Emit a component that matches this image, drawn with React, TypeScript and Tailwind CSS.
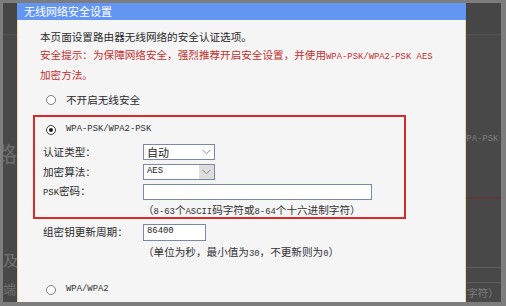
import React from "react";

const cjk = "font-['Noto_Sans_CJK_SC',sans-serif]";
const mono = "font-['Liberation_Mono',monospace] text-[8.9px]";

function Radio({ checked }: { checked?: boolean }) {
  return (
    <span
      className={`w-[10px] h-[10px] rounded-full border ${
        checked ? "border-[#3a3a3a]" : "border-[#7c7c7c]"
      } bg-white flex items-center justify-center shrink-0`}
    >
      {checked && <span className="w-[4px] h-[4px] rounded-full bg-[#1e1e1e]" />}
    </span>
  );
}

function Chevron() {
  return (
    <svg width="9" height="6" viewBox="0 0 9 6">
      <polyline points="0.5,0.8 4.5,4.8 8.5,0.8" fill="none" stroke="#8a8a8a" strokeWidth="1" />
    </svg>
  );
}

function Select({ value, grey, monoText }: { value: string; grey?: boolean; monoText?: boolean }) {
  return (
    <div className="w-[72px] h-[16px] border border-[#7a87a6] bg-white flex items-stretch">
      <span
        className={`flex-1 pl-[3px] flex items-center text-[#222] ${
          monoText ? mono : "text-[11px]"
        }`}
      >
        {value}
      </span>
      <span
        className={`w-[15px] flex items-center justify-center ${grey ? "bg-[#dedede]" : ""}`}
      >
        <Chevron />
      </span>
    </div>
  );
}

export default function App() {
  return (
    <div
      className={`w-[506px] h-[306px] bg-[#7d7d7d] pt-[3px] pl-[3px] pr-[5px] pb-[4px] flex overflow-hidden ${cjk}`}
    >
      {/* left background strip */}
      <div className="w-[14px] h-full bg-[#484848] relative overflow-hidden shrink-0">
        <div className="h-[32px] border-b border-[#525252] bg-[#464646]" />
        <span className="absolute left-[-8px] top-[137px] text-[22px] leading-[24px] text-[#6c6c6c]">
          路
        </span>
        <span className="absolute left-[0px] top-[248px] text-[15px] leading-[18px] text-[#727272]">
          及
        </span>
        <span className="absolute left-[0px] top-[277px] text-[13px] leading-[18px] text-[#727272]">
          端
        </span>
      </div>

      {/* dialog panel */}
      <div className="w-[449px] h-full flex flex-col shrink-0">
        <div className="h-[17px] bg-[#6396f3] flex items-center pl-[7px] text-white text-[11px] leading-none">
          无线网络安全设置
        </div>
        <div className="flex-1 bg-[#f5f5f5] border-x border-[#efd6a6] overflow-hidden text-[10.6px] text-[#2a2a2a]">
          <div className="pt-[8px] pl-[22px] leading-[18px]">
            <div>本页面设置路由器无线网络的安全认证选项。</div>
            <div className="text-[#c3302f]">
              安全提示：为保障网络安全，强烈推荐开启安全设置，并使用
              <span className={mono}>WPA-PSK/WPA2-PSK AES</span>
            </div>
            <div className="text-[#c3302f]">加密方法。</div>
          </div>

          <div className="mt-[7px] h-[18px] pl-[28px] flex items-center gap-[10px]">
            <Radio />
            <span>不开启无线安全</span>
          </div>

          {/* red highlighted box */}
          <div className="mt-[6px] ml-[15px] w-[373px] h-[104px] border-2 border-[#d42a2a] pt-[4px]">
            <div className="h-[18px] pl-[11px] flex items-center gap-[10px]">
              <Radio checked />
              <span className={`${mono} text-[#333]`}>WPA-PSK/WPA2-PSK</span>
            </div>
            <div className="mt-[3px] h-[20px] pl-[8px] flex items-center">
              <span className="w-[100px]">认证类型：</span>
              <Select value="自动" />
            </div>
            <div className="h-[20px] pl-[8px] flex items-center">
              <span className="w-[100px]">加密算法：</span>
              <Select value="AES" grey monoText />
            </div>
            <div className="h-[20px] pl-[8px] flex items-center">
              <span className="w-[100px]">
                <span className={mono}>PSK</span>密码：
              </span>
              <div className="w-[229px] h-[16px] border border-[#7a87a6] bg-white" />
            </div>
            <div className="h-[15px] pl-[108px] pt-[1px] leading-[14px] text-[#333]">
              <span>
                （<span className={mono}>8-63</span>个<span className={mono}>ASCII</span>码字符或<span className={mono}>8-64</span>个十六进制字符）
              </span>
            </div>
          </div>

          <div className="mt-[3px] h-[20px] pl-[25px] flex items-center">
            <span className="w-[100px]">组密钥更新周期：</span>
            <div className="w-[63px] h-[17px] border border-[#7a87a6] bg-white flex items-center pl-[3px]">
              <span className={`${mono} text-[#222]`}>86400</span>
            </div>
          </div>
          <div className="h-[20px] pl-[125px] leading-[20px] text-[#333]">
            <span>
              （单位为秒，最小值为<span className={mono}>30</span>，不更新则为<span className={mono}>0</span>）
            </span>
          </div>

          <div className="mt-[19px] h-[18px] pl-[28px] flex items-center gap-[10px]">
            <Radio />
            <span className={`${mono} text-[#333]`}>WPA/WPA2</span>
          </div>
          <div className="mt-[4px] ml-[125px] w-[72px] h-[16px] border border-[#7a87a6] bg-white" />
        </div>
      </div>

      {/* right background strip */}
      <div className="w-[35px] h-full bg-[#484848] relative overflow-hidden shrink-0">
        <div className="h-[32px] border-b border-[#525252] bg-[#464646]" />
        <span className={`absolute left-[-5px] top-[129px] ${mono} text-[#7e7e7e] leading-[14px]`}>
          WPA-PSK
        </span>
        <div className="absolute left-0 right-0 top-[194px] h-[2px] bg-[#5c3a3a]" />
        <div className="absolute left-0 right-0 top-[264px] h-[1px] bg-[#5e5e5e]" />
        <div className="absolute left-0 right-0 top-[279px] h-[1px] bg-[#5e5e5e]" />
        <span className="absolute left-[1px] top-[283px] text-[10.6px] leading-[14px] text-[#7e7e7e]">
          字符）
        </span>
      </div>
    </div>
  );
}
